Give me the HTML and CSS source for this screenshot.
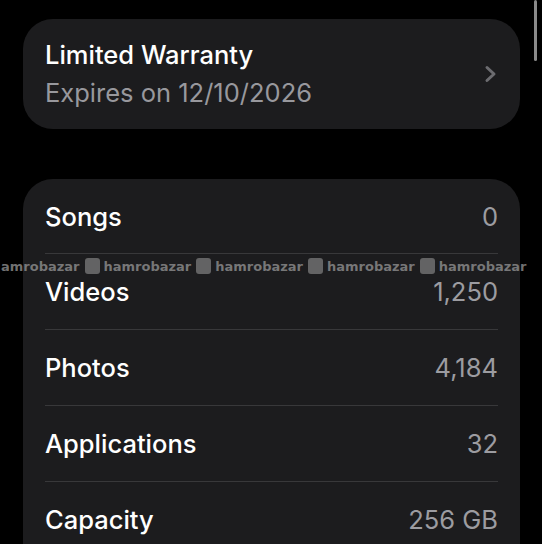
FILE: index.html
```html
<!DOCTYPE html>
<html>
<head>
<meta charset="utf-8">
<link rel="stylesheet" href="styles.css">
</head>
<body>
<div class="page">
  <div class="card warranty">
    <div class="warranty-text">
      <div class="title">Limited Warranty</div>
      <div class="subtitle">Expires on 12/10/2026</div>
    </div>
    <svg class="chevron" width="13" height="18" viewBox="0 0 13 18"><path d="M3 2.5 L10 9 L3 15.5" fill="none" stroke="#6c6c70" stroke-width="3" stroke-linecap="round" stroke-linejoin="round"/></svg>
  </div>
  <div class="card list">
    <div class="row"><span class="label">Songs</span><span class="value">0</span></div>
    <div class="row"><span class="label">Videos</span><span class="value">1,250</span></div>
    <div class="row"><span class="label">Photos</span><span class="value">4,184</span></div>
    <div class="row"><span class="label">Applications</span><span class="value">32</span></div>
    <div class="row"><span class="label">Capacity</span><span class="value">256 GB</span></div>
  </div>
</div>
<div class="watermark">
  <span class="wm-text">amrobazar</span>
  <span class="wm-item"><span class="wm-icon"></span><span class="wm-text">hamrobazar</span></span>
  <span class="wm-item"><span class="wm-icon"></span><span class="wm-text">hamrobazar</span></span>
  <span class="wm-item"><span class="wm-icon"></span><span class="wm-text">hamrobazar</span></span>
  <span class="wm-item"><span class="wm-icon"></span><span class="wm-text">hamrobazar</span></span>
</div>
<div class="scrollbar"></div>
</body>
</html>
```
FILE: styles.css
```css
html, body {
  margin: 0;
  padding: 0;
  background: #000;
  height: 100%;
  overflow: hidden;
}
body {
  font-family: Inter, "Noto Sans", sans-serif;
  color: #fff;
  position: relative;
}
.page {
  padding: 19px 22px 0 23px;
  display: flex;
  flex-direction: column;
  gap: 50px;
}
.card {
  background: #1c1c1e;
  border-radius: 30px;
  box-sizing: border-box;
}
.warranty {
  height: 110px;
  padding: 16px 23px 16px 22px;
  display: flex;
  align-items: center;
  justify-content: space-between;
}
.title {
  font-size: 25.5px;
  line-height: 38px;
  font-weight: 500;
  color: #fff;
}
.subtitle {
  font-size: 25.5px;
  line-height: 38px;
  color: #98989d;
}
.chevron {
  display: block;
}
.list {
  padding: 0 22px;
  border-bottom-left-radius: 0;
  border-bottom-right-radius: 0;
}
.row {
  height: 75px;
  display: flex;
  align-items: center;
  justify-content: space-between;
  font-size: 25.5px;
}
.row + .row {
  border-top: 1px solid #38383a;
}
.row:first-child {
  height: 74px;
}
.label {
  color: #fff;
  font-weight: 500;
}
.value {
  color: #9c9ca1;
}
.watermark {
  position: absolute;
  left: 1px;
  top: 258px;
  height: 16px;
  display: flex;
  align-items: center;
  gap: 5px;
  white-space: nowrap;
  font-family: "DejaVu Sans", sans-serif;
  font-weight: bold;
  font-size: 13px;
  color: rgba(150, 150, 150, 0.75);
}
.wm-item {
  display: flex;
  align-items: center;
  gap: 4px;
}
.wm-icon {
  width: 15px;
  height: 16px;
  border-radius: 3px;
  background: rgba(130, 130, 130, 0.7);
}
.wm-text {
  letter-spacing: 0;
}
.scrollbar {
  position: absolute;
  left: 534px;
  top: 0;
  width: 3px;
  height: 61px;
  border-radius: 2px;
  background: #8a8a8a;
}
```
